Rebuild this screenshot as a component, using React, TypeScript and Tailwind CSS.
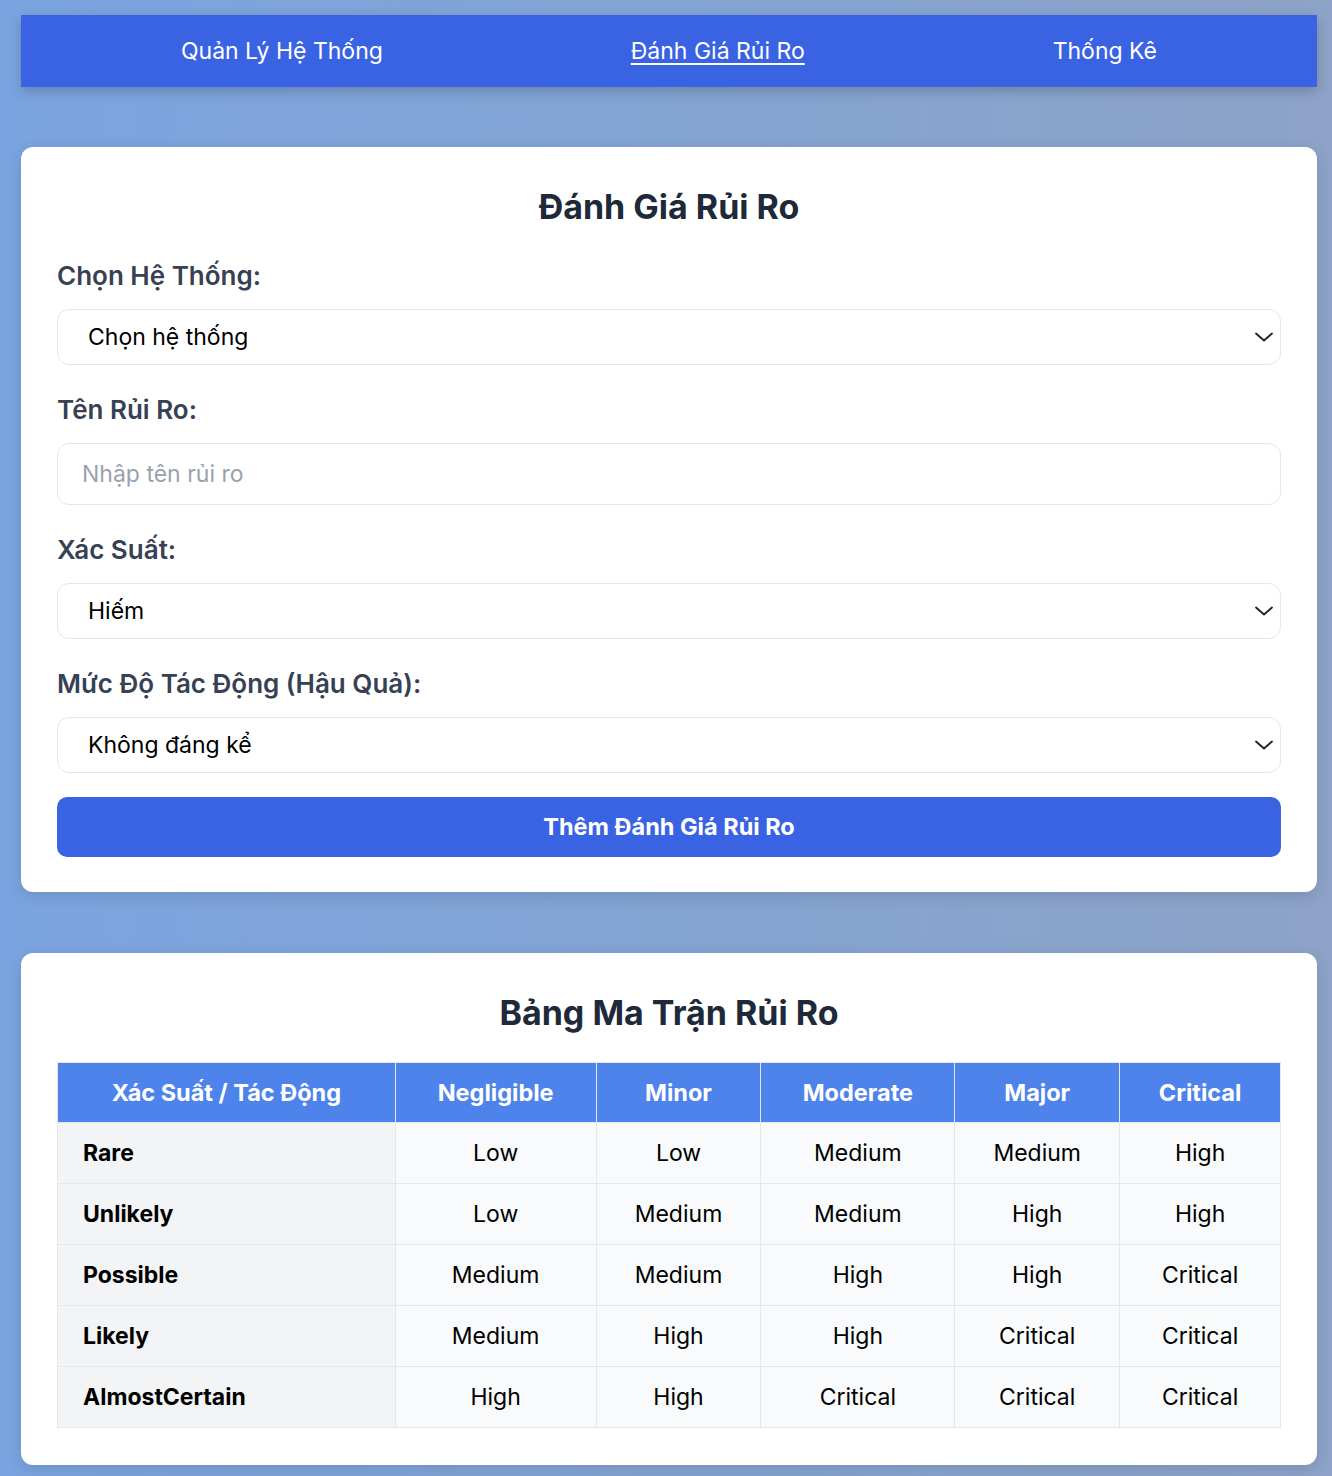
import React, { useState } from 'react'

const levels = ['Negligible', 'Minor', 'Moderate', 'Major', 'Critical']

const matrix: { name: string; values: string[] }[] = [
  { name: 'Rare', values: ['Low', 'Low', 'Medium', 'Medium', 'High'] },
  { name: 'Unlikely', values: ['Low', 'Medium', 'Medium', 'High', 'High'] },
  { name: 'Possible', values: ['Medium', 'Medium', 'High', 'High', 'Critical'] },
  { name: 'Likely', values: ['Medium', 'High', 'High', 'Critical', 'Critical'] },
  { name: 'AlmostCertain', values: ['High', 'High', 'Critical', 'Critical', 'Critical'] },
]

const colWidths = ['w-[338px]', 'w-[201px]', 'w-[165px]', 'w-[194px]', 'w-[165px]', 'w-[161px]']

function Chevron() {
  return (
    <svg
      className="pointer-events-none absolute right-[8px] top-1/2 -translate-y-1/2"
      width="18"
      height="10"
      viewBox="0 0 18 10"
      fill="none"
    >
      <path d="M1 1.5L9 8.5L17 1.5" stroke="#1f1f1f" strokeWidth="1.8" strokeLinecap="round" strokeLinejoin="round" />
    </svg>
  )
}

function Select({ value, options }: { value: string; options: string[] }) {
  const [selected, setSelected] = useState(value)
  return (
    <div className="relative">
      <select
        value={selected}
        onChange={(e) => setSelected(e.target.value)}
        className="w-full h-[56px] appearance-none rounded-xl border border-[#e5e7eb] bg-white pl-[30px] pr-10 text-[23px] text-black outline-none"
      >
        {options.map((o) => (
          <option key={o} value={o}>
            {o}
          </option>
        ))}
      </select>
      <Chevron />
    </div>
  )
}

export default function App() {
  return (
    <div
      className="min-h-screen bg-gradient-to-r from-[#7aa4df] to-[#8da3c7] pl-[21px] pr-[15px] pt-[15px] pb-[12px] text-black"
      style={{ fontFamily: 'Inter, "Noto Sans", sans-serif' }}
    >
      {/* Nav */}
      <nav className="flex h-[72px] items-center justify-around bg-[#3a63e4] px-9 text-[23px] text-white shadow-[0_4px_12px_rgba(0,0,0,0.2)]">
        <a className="cursor-pointer">Quản Lý Hệ Thống</a>
        <a className="cursor-pointer underline underline-offset-4 decoration-2">Đánh Giá Rủi Ro</a>
        <a className="cursor-pointer">Thống Kê</a>
      </nav>

      {/* Form card */}
      <div className="mt-[60px] rounded-xl bg-white px-9 pt-9 pb-[35px] shadow-[0_4px_16px_rgba(0,0,0,0.12)]">
        <h2 className="text-center text-[34px] leading-[48px] font-bold text-gray-800 mb-[27px]">Đánh Giá Rủi Ro</h2>

        <div className="mb-[27px]">
          <label className="block text-[26px] leading-[36px] font-semibold text-gray-700 mb-[15px]">Chọn Hệ Thống:</label>
          <Select value="Chọn hệ thống" options={['Chọn hệ thống']} />
        </div>

        <div className="mb-[27px]">
          <label className="block text-[26px] leading-[36px] font-semibold text-gray-700 mb-[15px]">Tên Rủi Ro:</label>
          <input
            type="text"
            placeholder="Nhập tên rủi ro"
            className="w-full h-[62px] rounded-xl border border-[#e5e7eb] bg-white px-6 text-[23px] text-black placeholder:text-gray-400 outline-none"
          />
        </div>

        <div className="mb-[27px]">
          <label className="block text-[26px] leading-[36px] font-semibold text-gray-700 mb-[15px]">Xác Suất:</label>
          <Select value="Hiếm" options={['Hiếm', 'Không chắc', 'Có thể', 'Có khả năng', 'Gần như chắc chắn']} />
        </div>

        <div className="mb-6">
          <label className="block text-[26px] leading-[36px] font-semibold text-gray-700 mb-[15px]">Mức Độ Tác Động (Hậu Quả):</label>
          <Select value="Không đáng kể" options={['Không đáng kể', 'Nhỏ', 'Trung bình', 'Lớn', 'Nghiêm trọng']} />
        </div>

        <button className="w-full h-[60px] rounded-[10px] bg-[#3a63e4] text-[23.5px] font-bold text-white">Thêm Đánh Giá Rủi Ro</button>
      </div>

      {/* Matrix card */}
      <div className="mt-[61px] rounded-xl bg-white px-9 pt-9 pb-[37px] shadow-[0_4px_16px_rgba(0,0,0,0.12)]">
        <h2 className="text-center text-[34px] leading-[48px] font-bold text-gray-800 mb-[25px]">Bảng Ma Trận Rủi Ro</h2>
        <table className="w-full border-collapse text-[23px]">
          <thead>
            <tr className="bg-[#4f83ec] text-white">
              <th className={`${colWidths[0]} h-[60px] border border-[#e5e7eb] text-[23.5px] font-bold`}>Xác Suất / Tác Động</th>
              {levels.map((l, i) => (
                <th key={l} className={`${colWidths[i + 1]} h-[60px] border border-[#e5e7eb] text-[23.5px] font-bold`}>
                  {l}
                </th>
              ))}
            </tr>
          </thead>
          <tbody>
            {matrix.map((row) => (
              <tr key={row.name}>
                <td className="h-[61px] border border-[#e5e7eb] bg-[#f3f4f6] pl-[25px] font-bold">{row.name}</td>
                {row.values.map((v, i) => (
                  <td key={i} className="h-[61px] border border-[#e5e7eb] bg-[#f9fafb] text-center">
                    {v}
                  </td>
                ))}
              </tr>
            ))}
          </tbody>
        </table>
      </div>
    </div>
  )
}
